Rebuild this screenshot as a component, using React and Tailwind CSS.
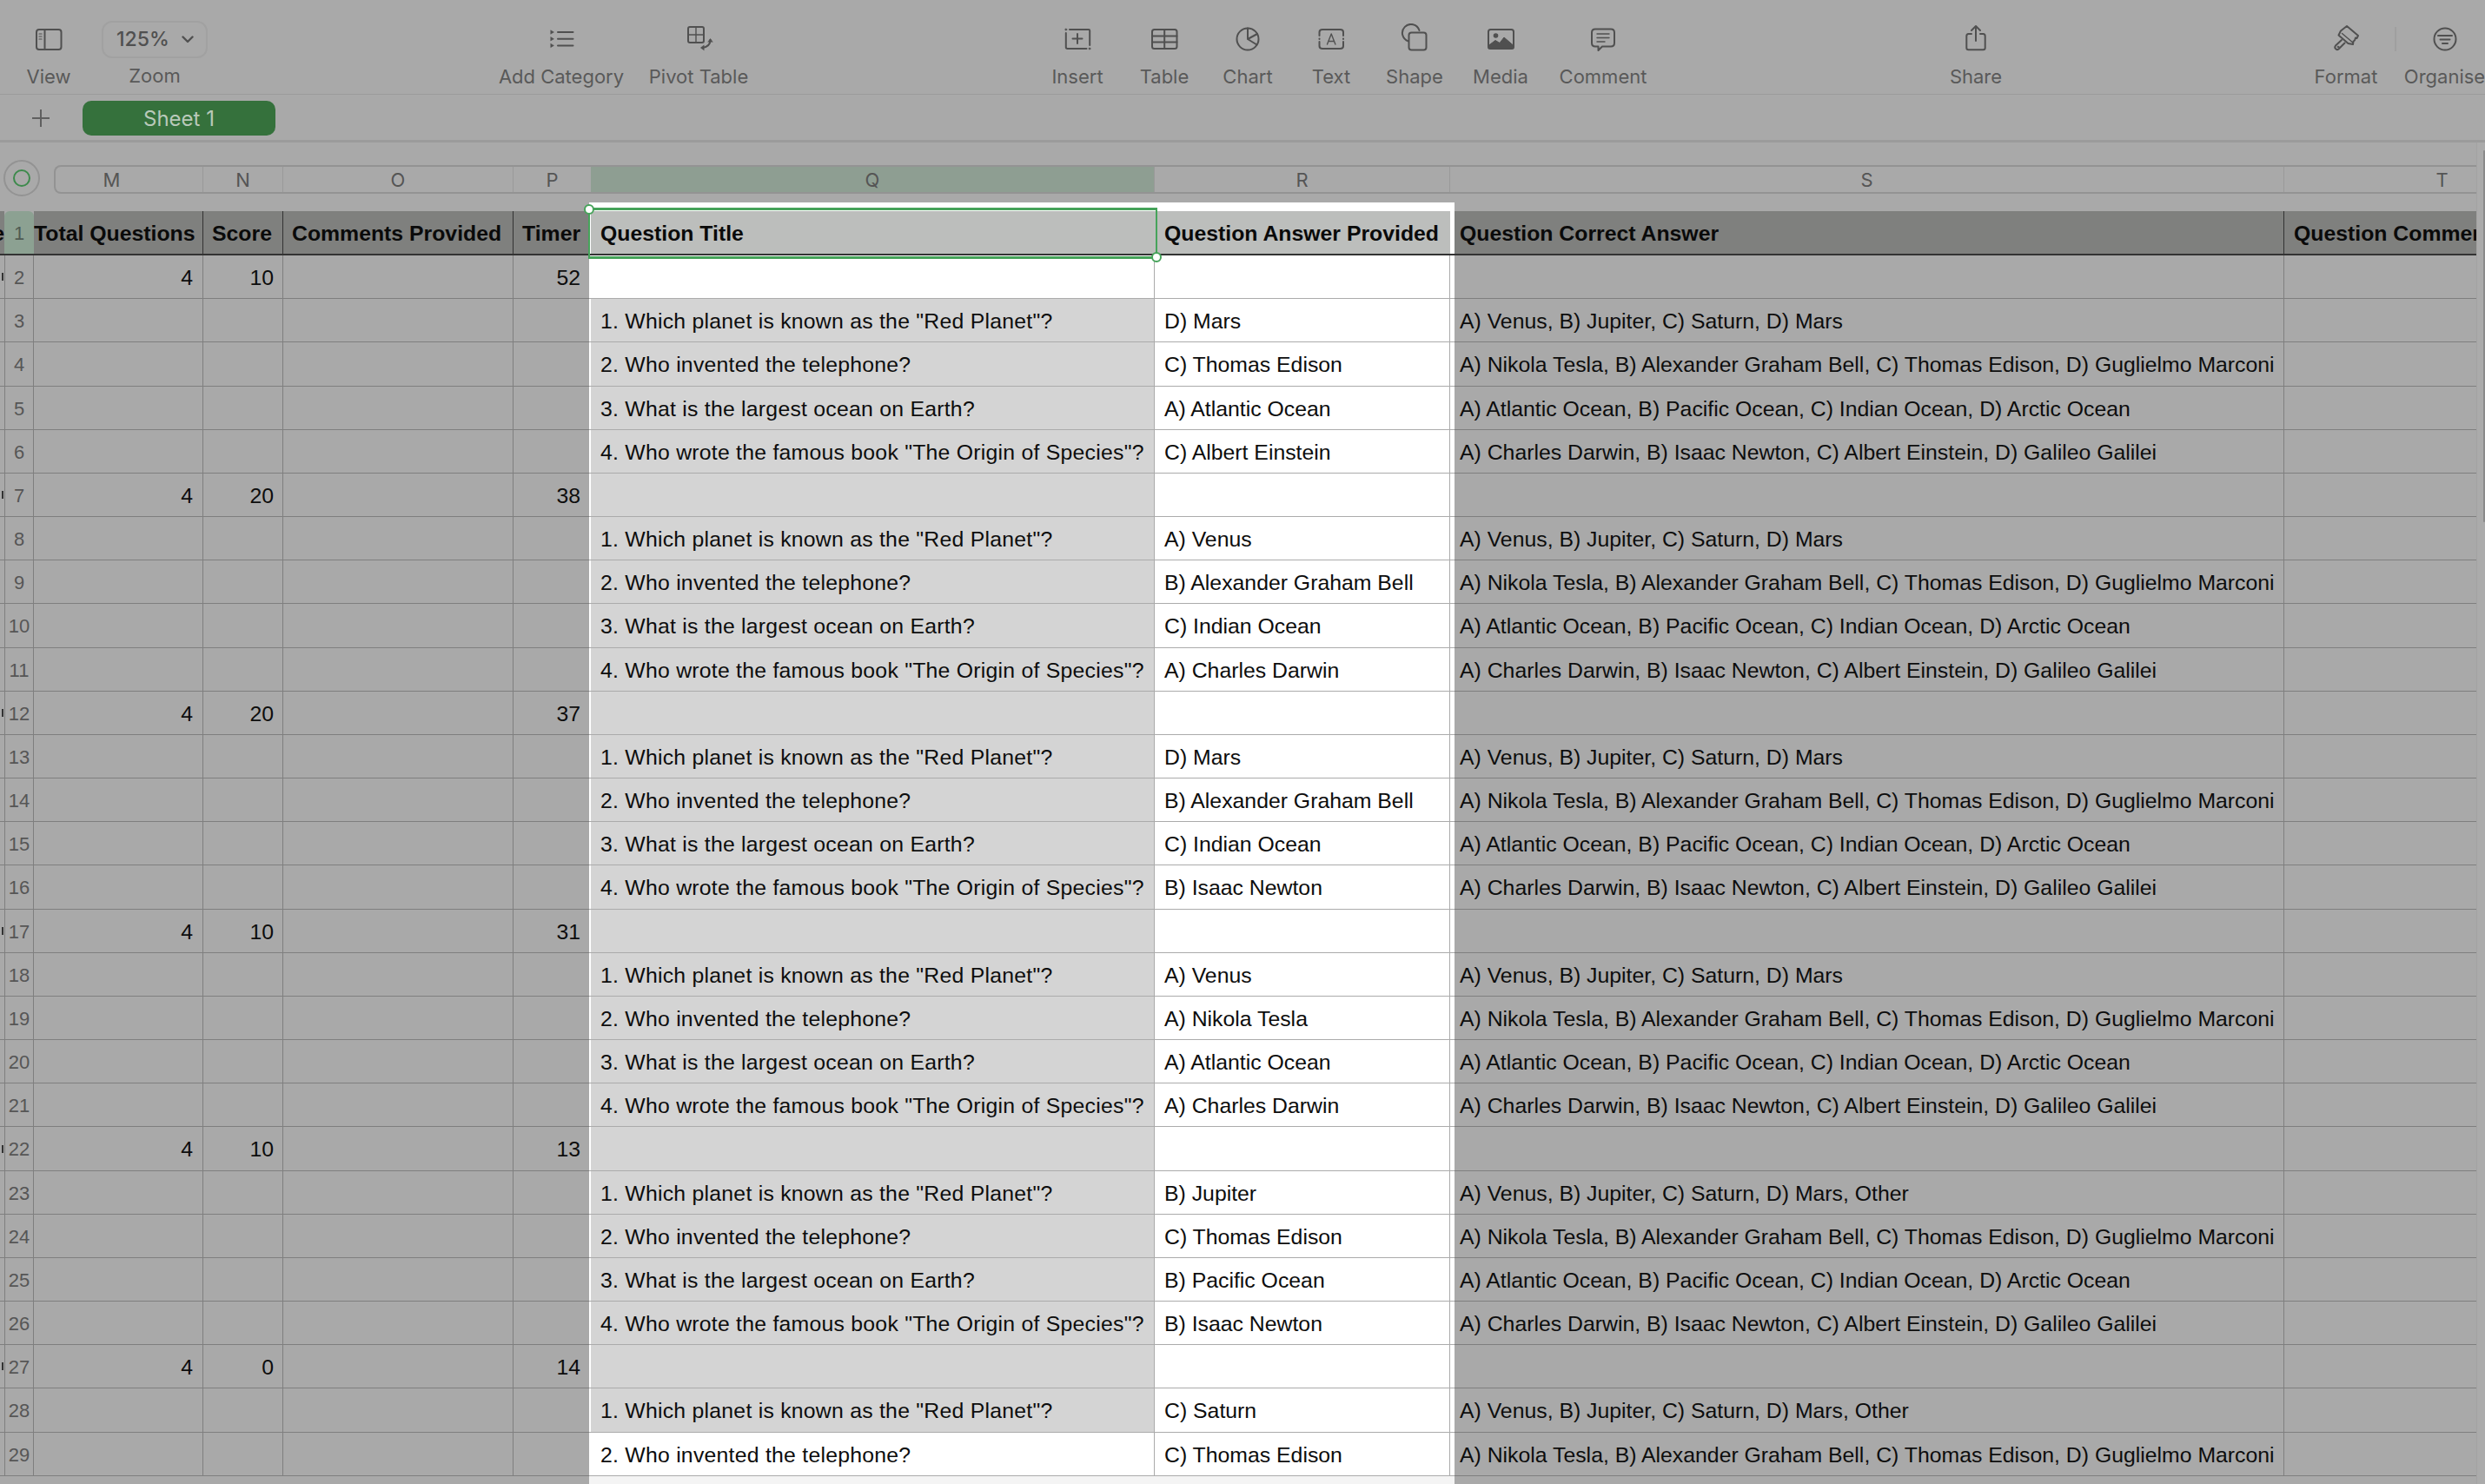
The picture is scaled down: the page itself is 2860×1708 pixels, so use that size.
const planet = "1. Which planet is known as the \"Red Planet\"?";
const phone = "2. Who invented the telephone?";
const ocean = "3. What is the largest ocean on Earth?";
const book = "4. Who wrote the famous book \"The Origin of Species\"?";
const questions = [planet, phone, ocean, book];

const planetOpts = "A) Venus, B) Jupiter, C) Saturn, D) Mars";
const phoneOpts = "A) Nikola Tesla, B) Alexander Graham Bell, C) Thomas Edison, D) Guglielmo Marconi";
const oceanOpts = "A) Atlantic Ocean, B) Pacific Ocean, C) Indian Ocean, D) Arctic Ocean";
const bookOpts = "A) Charles Darwin, B) Isaac Newton, C) Albert Einstein, D) Galileo Galilei";

const groups = [
  { score: 10, timer: 52, answers: ["D) Mars", "C) Thomas Edison", "A) Atlantic Ocean", "C) Albert Einstein"] },
  { score: 20, timer: 38, answers: ["A) Venus", "B) Alexander Graham Bell", "C) Indian Ocean", "A) Charles Darwin"] },
  { score: 20, timer: 37, answers: ["D) Mars", "B) Alexander Graham Bell", "C) Indian Ocean", "B) Isaac Newton"] },
  { score: 10, timer: 31, answers: ["A) Venus", "A) Nikola Tesla", "A) Atlantic Ocean", "A) Charles Darwin"] },
  { score: 10, timer: 13, other: true, answers: ["B) Jupiter", "C) Thomas Edison", "B) Pacific Ocean", "B) Isaac Newton"] },
  { score: 0, timer: 14, other: true, answers: ["C) Saturn", "C) Thomas Edison"] },
];

const rows = [];
groups.forEach((g) => {
  rows.push({ total: 4, score: g.score, timer: g.timer });
  g.answers.forEach((a, i) => {
    const opts = [planetOpts, phoneOpts, oceanOpts, bookOpts][i];
    rows.push({ q: questions[i], a, s: i === 0 && g.other ? opts + ", Other" : opts });
  });
});

const Ico = ({ children }) => (
  <svg width="36" height="36" viewBox="0 0 36 36" fill="none" stroke="#505050" strokeWidth="2" strokeLinecap="round" strokeLinejoin="round">
    {children}
  </svg>
);

const tools = [
  { label: "View", w: "w-[70px]", ml: "ml-[21px]", icon: (
    <Ico>
      <rect x="4" y="7" width="28.5" height="23" rx="3" />
      <path d="M13.5 7v23" />
      <path d="M7 12h3M7 15h3M7 18h3" strokeWidth="1.2" />
    </Ico>
  ) },
  { label: "Zoom", zoom: true },
  { label: "Add Category", w: "w-[160px]", ml: "ml-[327px]", icon: (
    <Ico>
      <path d="M14 10h17.5M14 17.8h17.5M14 25.4h17.5" />
      <path d="M6 8l3.4 2L6 12zM6 15.8l3.4 2-3.4 2zM6 23.4l3.4 2-3.4 2z" fill="#505050" strokeWidth="0.6" />
    </Ico>
  ) },
  { label: "Pivot Table", w: "w-[130px]", ml: "ml-[13px]", icon: (
    <Ico>
      <rect x="6" y="4" width="18" height="18" rx="2" />
      <path d="M15 4v18M6 13h18" strokeWidth="1.4" />
      <path d="M31.5 19c0 5-3 8-9 9" />
      <path d="M29 21l2.5-3.5 2.5 3.5zM24 25.2l-3.6 2.8 3.6 2.6z" fill="#505050" strokeWidth="0.6" />
    </Ico>
  ) },
  { label: "Insert", w: "w-[80px]", ml: "ml-[331px]", icon: (
    <Ico>
      <path d="M9 7h22c.7 0 1.2.5 1.2 1.2V25M28.5 29H6.5c-1 0-1.7-.7-1.7-1.7V11" />
      <path d="M18 12v11M12.5 17.5h11" />
      <circle cx="4.8" cy="7" r="1.1" fill="#505050" strokeWidth="0.5" />
      <circle cx="32" cy="29" r="1.1" fill="#505050" strokeWidth="0.5" />
    </Ico>
  ) },
  { label: "Table", w: "w-[80px]", ml: "ml-[20px]", icon: (
    <Ico>
      <rect x="4" y="7" width="28.5" height="22" rx="2.5" />
      <path d="M4 14.5h28.5M4 21.5h28.5M18.2 7v22" />
    </Ico>
  ) },
  { label: "Chart", w: "w-[80px]", ml: "ml-[16px]", icon: (
    <Ico>
      <circle cx="18" cy="18" r="12.5" />
      <path d="M18 5.5V18l10.5 6.5M18 18l11-6" />
    </Ico>
  ) },
  { label: "Text", w: "w-[80px]", ml: "ml-[16px]", icon: (
    <Ico>
      <path d="M8 7h20.5c2 0 3.5 1 3.5 3v4M32 21v5c0 2-1.5 3-3.5 3H8c-2 0-3.5-1-3.5-3v-5M4.5 14v-4c0-2 1.5-3 3.5-3M4.5 17.5v.5M32 17.5v.5" />
      <path d="M13.5 24l4.7-12 4.7 12M15 20.5h6.5" strokeWidth="1.4" />
    </Ico>
  ) },
  { label: "Shape", w: "w-[80px]", ml: "ml-[16px]", icon: (
    <Ico>
      <path d="M11 20.5A10 10 0 1 1 23.5 8" />
      <rect x="11.5" y="10.5" width="20" height="20" rx="3" />
    </Ico>
  ) },
  { label: "Media", w: "w-[80px]", ml: "ml-[19px]", icon: (
    <Ico>
      <rect x="4" y="7" width="29" height="22" rx="2.5" />
      <circle cx="12.5" cy="14" r="2.8" fill="#505050" stroke="none" />
      <path d="M4 28.5v-3l8-6 5 3 5-6.5 11 9.5v3z" fill="#505050" strokeWidth="1" />
    </Ico>
  ) },
  { label: "Comment", w: "w-[120px]", ml: "ml-[18px]", icon: (
    <Ico>
      <path d="M9 6.5h18c2.5 0 4 1.5 4 4v12c0 2.5-1.5 4-4 4h-10l-4.5 4.5v-4.5H9c-2.5 0-4-1.5-4-4v-12c0-2.5 1.5-4 4-4z" />
      <path d="M11 12h14M11 16.5h14M11 21h9" strokeWidth="1.4" />
    </Ico>
  ) },
  { label: "Share", w: "w-[80px]", ml: "ml-[329px]", icon: (
    <Ico>
      <path d="M13 12H9.5C8 12 7.3 13 7.3 14.5V28c0 1.5.7 2.3 2.2 2.3h17c1.5 0 2.2-.8 2.2-2.3V14.5c0-1.5-.7-2.5-2.2-2.5H23" />
      <path d="M18 20V3.5M13 8l5-5 5 5" />
    </Ico>
  ) },
  { label: "Format", w: "w-[90px]", ml: "ml-[341px]", icon: (
    <Ico>
      <path d="M19 3l13 11-1.5 3-1.5-.5-1 3-1.5 1-.5 3.5-5.5-1-11-9.5 2.5-5z" />
      <path d="M13.5 11.5l13 11" strokeWidth="1.4" />
      <path d="M13 19l-7 6.5c-2 2.5 1 6 3.5 4l7-7" />
      <circle cx="9" cy="27" r="1" fill="#505050" strokeWidth="0.6" />
    </Ico>
  ) },
  { divider: true },
  { label: "Organise", w: "w-[94px]", ml: "ml-[9px]", icon: (
    <Ico>
      <circle cx="18" cy="18" r="12.5" />
      <path d="M10 14h16M12.5 18.5h11M15 23h6" />
    </Ico>
  ) },
];

const Toolbar = () => (
  <div className="flex h-[109px] border-b border-[#9b9b9b] pt-[27px] overflow-hidden">
    {tools.map((t, i) => {
      if (t.divider) return <div key={i} className="ml-[11px] w-[1.5px] h-[28px] mt-[4px] bg-[#9f9f9f] shrink-0" />;
      if (t.zoom) {
        return (
          <div key={i} className="ml-[26px] w-[122px] shrink-0 flex flex-col items-center">
            <div className="-mt-[3px] h-[43px] w-full rounded-[12px] border-2 border-[#a1a1a1] flex items-center pl-[15px] gap-[14px] text-[23px] font-medium text-[#505050]">
              <span className="leading-none">125%</span>
              <svg width="14" height="9" viewBox="0 0 14 9" fill="none" stroke="#505050" strokeWidth="2.4" strokeLinecap="round" strokeLinejoin="round">
                <path d="M1.5 1.5L7 7l5.5-5.5" />
              </svg>
            </div>
            <div className="mt-[6px] h-[28px] leading-[28px] text-[22px] text-[#595959] whitespace-nowrap">{t.label}</div>
          </div>
        );
      }
      return (
        <div key={i} className={`${t.ml} ${t.w} shrink-0 flex flex-col items-center`}>
          {t.icon}
          <div className="mt-[11px] h-[28px] leading-[28px] text-[22px] text-[#595959] whitespace-nowrap">{t.label}</div>
        </div>
      );
    })}
  </div>
);

const SheetBar = () => (
  <div className="flex items-center h-[55px] border-b-[3px] border-[#9b9b9b] pt-[1px]">
    <svg className="ml-[36px]" width="22" height="22" viewBox="0 0 22 22" stroke="#5f5f5f" strokeWidth="2">
      <path d="M11 1v20M1 11h20" />
    </svg>
    <div className="ml-[37px] w-[222px] h-[40px] pt-[2px] rounded-[10px] bg-[#35713c] flex items-center justify-center text-[24px] text-[#b9c9ba]">Sheet 1</div>
  </div>
);

const ColumnBar = () => (
  <div className="flex h-[69px] pt-[26px]">
    <div className="ml-[4px] -mt-[6px] w-[42px] h-[42px] rounded-full border-2 border-[#939393] shrink-0 flex items-center justify-center">
      <div className="w-[20px] h-[20px] rounded-full border-2 border-[#3d8a4c]" />
    </div>
    <div className="ml-[16px] flex h-[33px] border-y-2 border-[#939393] rounded-l-[8px] border-l-2 text-[22px] leading-[31px] text-[#555] text-center">
      <div className="w-[170px] pr-[40px] border-r border-[#999]">M</div>
      <div className="w-[92px] border-r border-[#999]">N</div>
      <div className="w-[265px] border-r border-[#999]">O</div>
      <div className="w-[89px]">P</div>
      <div className="w-[649px] bg-[#8e9e92] border-r border-[#999]">Q</div>
      <div className="w-[340px] border-r border-[#999]">R</div>
      <div className="w-[960px] border-r border-[#999]">S</div>
      <div className="w-[221px] pl-[142px]">T</div>
    </div>
  </div>
);

const dimCell = "border-r border-[#7f7f7f] overflow-hidden whitespace-nowrap";

const HeaderRow = () => (
  <div className="relative flex h-[51px] font-bold text-[#0a0a0a] leading-[51px]">
    <div className="w-[5px] border-b-2 border-[#333] bg-[#7f807e] flex justify-end overflow-hidden shrink-0">e</div>
    <div className="w-[34px] border-b-2 border-[#333] bg-[#8ca192] rounded-t-[6px] text-center text-[22px] font-normal text-[#4f5a52] shrink-0">1</div>
    <div className={`w-[195px] text-right pr-[15px] border-b-2 border-[#333] bg-[#7f807e] ${dimCell}`}>Total Questions</div>
    <div className={`w-[92px] pl-[10px] border-b-2 border-[#333] bg-[#7f807e] ${dimCell}`}>Score</div>
    <div className={`w-[265px] pl-[10px] border-b-2 border-[#333] bg-[#7f807e] ${dimCell}`}>Comments Provided</div>
    <div className="w-[87px] pl-[10px] border-b-2 border-[#333] bg-[#7f807e] overflow-hidden">Timer</div>
    <div className="w-[2px] bg-white border-b-2 border-[#333]" />
    <div className="w-[649px] pl-[11px] bg-[#bcbebc] border-b-2 border-[#333]">Question Title</div>
    <div className="w-[340px] pl-[11px] bg-[#bcbebc] border-b-2 border-[#333] whitespace-nowrap">Question Answer Provided</div>
    <div className="w-[5px] bg-white border-b-2 border-[#333]" />
    <div className={`w-[955px] pl-[6px] border-b-2 border-[#333] bg-[#7f807e] ${dimCell}`}>Question Correct Answer</div>
    <div className="w-[222px] pl-[11px] border-b-2 border-[#333] bg-[#7f807e] overflow-hidden whitespace-nowrap">Question Comments</div>

    {/* selected cell */}
    <div className="absolute left-[677px] top-[-4px] w-[655px] h-[59px] border-x-2 border-y-[3px] border-[#46a35a]">
      <div className="absolute -left-[7px] -top-[7px] w-[12px] h-[12px] rounded-full bg-white border-2 border-[#46a35a]" />
      <div className="absolute -right-[7px] -bottom-[7px] w-[12px] h-[12px] rounded-full bg-white border-2 border-[#46a35a]" />
    </div>
  </div>
);

const Row = ({ row, n }) => {
  const qBg = n === 2 || n === 29 ? "bg-white" : "bg-[#d4d4d4]";
  return (
    <div className="flex h-[50.18px] leading-[51px] text-[#0d0d0d]">
      <div className="w-[5px] border-b border-[#7f7f7f] flex items-center shrink-0">
        {row.total && <div className="ml-[2px] w-[2px] h-[9px] bg-[#333]" />}
      </div>
      <div className="w-[34px] border-b border-x border-[#7f7f7f] text-center text-[22px] text-[#565656] shrink-0">{n}</div>
      <div className={`w-[195px] pr-[11px] text-right border-b ${dimCell}`}>{row.total}</div>
      <div className={`w-[92px] pr-[10px] text-right border-b ${dimCell}`}>{row.score}</div>
      <div className={`w-[265px] border-b ${dimCell}`} />
      <div className="w-[87px] pr-[10px] text-right border-b border-[#7f7f7f]">{row.timer}</div>
      <div className="w-[2px] bg-white border-b border-[#ababab]" />
      <div className={`w-[649px] pl-[11px] tracking-[0.24px] whitespace-nowrap border-b border-[#ababab] border-r ${qBg}`}>{row.q}</div>
      <div className="w-[340px] pl-[11px] bg-white border-b border-r border-[#ababab] whitespace-nowrap">{row.a}</div>
      <div className="w-[5px] bg-white border-b border-[#ababab]" />
      <div className={`w-[955px] pl-[6px] border-b ${dimCell}`}>{row.s}</div>
      <div className="w-[222px] border-b border-[#7f7f7f]" />
    </div>
  );
};

export default function App() {
  return (
    <div className="relative w-[2860px] h-[1708px] overflow-hidden bg-[#a9a9a9] font-['Inter',sans-serif]">
      <Toolbar />
      <SheetBar />
      <ColumnBar />
      <div className="flex h-[10px]">
        <div className="ml-[678px] w-[996px] bg-white" />
      </div>
      <div className="text-[24.8px] font-['Liberation_Sans',sans-serif]">
        <HeaderRow />
        {rows.map((row, i) => (
          <Row key={i} row={row} n={i + 2} />
        ))}
      </div>
      <div className="flex h-[9px]">
        <div className="ml-[678px] w-[996px] bg-[#f4f4f4]" />
      </div>
      {/* scrollbar */}
      <div className="absolute right-0 top-[164px] bottom-0 w-[10px] bg-[#ababab] border-l border-[#a2a2a2]">
        <div className="absolute right-0 top-[9px] w-[2px] h-[428px] rounded-full bg-[#8a8a8a]" />
      </div>
    </div>
  );
}
